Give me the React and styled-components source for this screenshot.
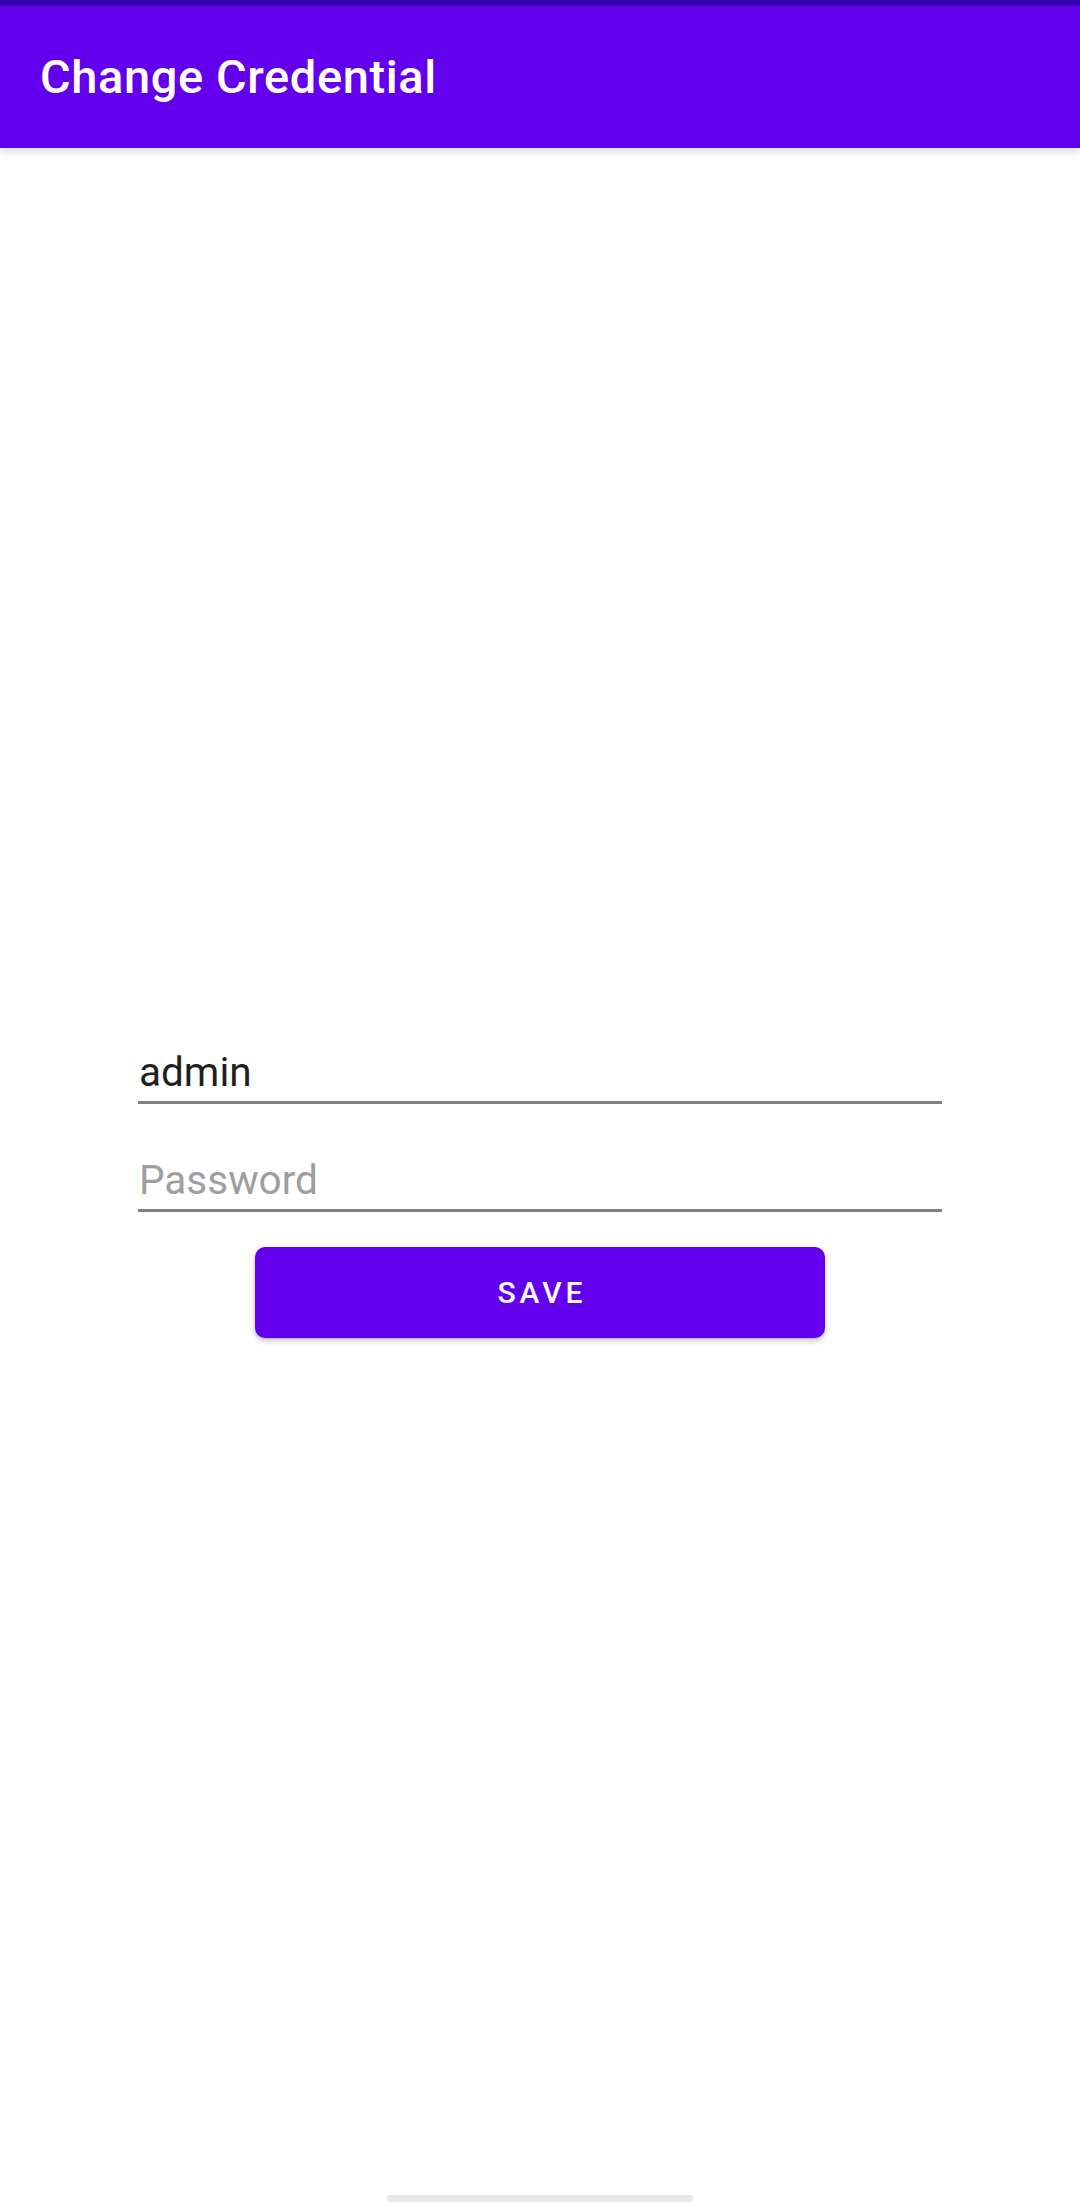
import React from "react";
import styled, { createGlobalStyle } from "styled-components";

const GlobalStyle = createGlobalStyle`
  html, body {
    margin: 0;
    padding: 0;
    background: #ffffff;
  }
  * { box-sizing: border-box; }
  body {
    font-family: Roboto, "Noto Sans", "Liberation Sans", sans-serif;
  }
`;

const Screen = styled.div`
  width: 1080px;
  min-height: 2204px;
  display: flex;
  flex-direction: column;
  background: #ffffff;
`;

const StatusStrip = styled.div`
  height: 6px;
  background: #3700b3;
`;

const AppBar = styled.header`
  height: 142px;
  background: #6200ee;
  display: flex;
  align-items: center;
  padding: 0 0 0 40px;
  box-shadow: 0 3px 8px rgba(0, 0, 0, 0.16);
  position: relative;
  z-index: 1;
`;

const Title = styled.h1`
  margin: 0;
  color: #ffffff;
  font-family: Roboto, "Liberation Sans", sans-serif;
  font-weight: 500;
  font-size: 47px;
  line-height: 54px;
  letter-spacing: 0.6px;
`;

const Content = styled.main`
  flex: 1;
  display: flex;
  flex-direction: column;
  align-items: center;
  padding-top: 900px;
`;

const Form = styled.form`
  width: 804px;
  display: flex;
  flex-direction: column;
  align-items: center;
`;

const TextField = styled.input`
  display: block;
  width: 100%;
  height: 56px;
  margin: ${(p) => p.$gapTop || 0}px 0 0;
  padding: 0 0 6px 1px;
  border: none;
  border-bottom: 3px solid #808080;
  outline: none;
  background: transparent;
  font-family: Roboto, "Liberation Sans", sans-serif;
  font-size: 40.5px;
  line-height: 47px;
  color: #1f1f1f;

  &::placeholder {
    color: #9e9e9e;
    opacity: 1;
  }
`;

const SaveButton = styled.button`
  width: 570px;
  height: 91px;
  margin-top: 35px;
  border: none;
  border-radius: 10px;
  background: #6200ee;
  color: #ffffff;
  font-family: Roboto, "Liberation Sans", sans-serif;
  font-weight: 500;
  font-size: 30px;
  letter-spacing: 4px;
  text-transform: uppercase;
  box-shadow: 0 3px 6px rgba(0, 0, 0, 0.22), 0 1px 2px rgba(0, 0, 0, 0.12);
  cursor: pointer;
  padding: 0 0 0 4px;
`;

const NavArea = styled.div`
  height: 9px;
  display: flex;
  justify-content: center;
  align-items: flex-start;
`;

const HomeHandle = styled.div`
  width: 306px;
  height: 7px;
  border-radius: 4px;
  background: #e8e8e8;
`;

export default function App() {
  return (
    <>
      <GlobalStyle />
      <Screen>
        <StatusStrip />
        <AppBar>
          <Title>Change Credential</Title>
        </AppBar>
        <Content>
          <Form onSubmit={(e) => e.preventDefault()}>
            <TextField type="text" defaultValue="admin" />
            <TextField type="password" placeholder="Password" $gapTop={52} />
            <SaveButton type="submit">Save</SaveButton>
          </Form>
        </Content>
        <NavArea>
          <HomeHandle />
        </NavArea>
      </Screen>
    </>
  );
}
